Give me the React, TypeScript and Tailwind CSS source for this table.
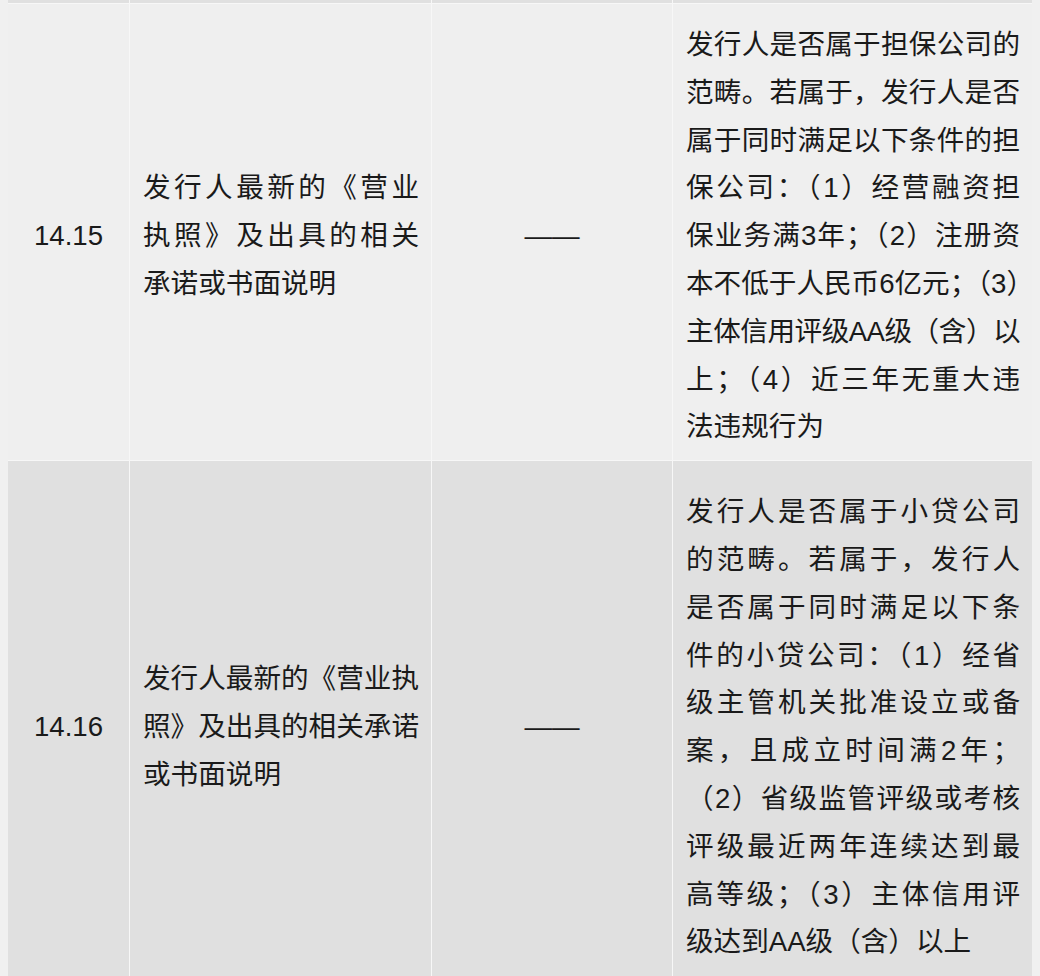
const font = { fontFamily: '"Liberation Sans", "Noto Sans CJK SC", sans-serif' }

interface Row {
  no: string
  material: string[]
  review: string[]
  bg: string
  pad: string
}

// lines that come out a few px wider than the column with our fonts
const tight = new Set(["主体信用评级AA级（含）以"])

const rows: Row[] = [
  {
    no: "14.15",
    material: ["发行人最新的《营业", "执照》及出具的相关", "承诺或书面说明"],
    review: [
      "发行人是否属于担保公司的",
      "范畴。若属于，发行人是否",
      "属于同时满足以下条件的担",
      "保公司：（1）经营融资担",
      "保业务满3年；（2）注册资",
      "本不低于人民币6亿元；（3）",
      "主体信用评级AA级（含）以",
      "上；（4）近三年无重大违",
      "法违规行为",
    ],
    bg: "bg-[#efefef]",
    pad: "pt-[17px] pb-[9px]",
  },
  {
    no: "14.16",
    material: ["发行人最新的《营业执", "照》及出具的相关承诺", "或书面说明"],
    review: [
      "发行人是否属于小贷公司",
      "的范畴。若属于，发行人",
      "是否属于同时满足以下条",
      "件的小贷公司：（1）经省",
      "级主管机关批准设立或备",
      "案，且成立时间满2年；",
      "（2）省级监管评级或考核",
      "评级最近两年连续达到最",
      "高等级；（3）主体信用评",
      "级达到AA级（含）以上",
    ],
    bg: "bg-[#e0e0e0]",
    pad: "pt-[27px] pb-[19px]",
  },
]

// each line is justified to the column width except the paragraph's last one
function Lines({ lines }: { lines: string[] }) {
  return (
    <>
      {lines.map((line, i) => {
        let cls = "whitespace-nowrap"
        if (i < lines.length - 1) cls += " text-justify [text-align-last:justify]"
        if (tight.has(line)) cls += " tracking-[-0.6px]"
        return (
          <div key={line} className={cls}>
            {line}
          </div>
        )
      })}
    </>
  )
}

export default function App() {
  return (
    <div className="h-[976px] overflow-hidden bg-[#f0f0f0] px-2" style={font}>
      <div className="grid grid-cols-[121px_301px_240px_359px] gap-px bg-[#f7f7f7] text-[27.6px] leading-[47.8px] text-[#1a1a1a]">
        {/* tail of the previous row */}
        <div className="h-[3px] bg-[#e0e0e0]" />
        <div className="h-[3px] bg-[#e0e0e0]" />
        <div className="h-[3px] bg-[#e0e0e0]" />
        <div className="h-[3px] bg-[#e0e0e0]" />

        {rows.map((row) => (
          <div key={row.no} className="contents">
            <div className={`flex items-center justify-center ${row.bg} ${row.pad}`}>
              <span>{row.no}</span>
            </div>
            <div className={`flex items-center pl-[13px] pr-[12px] ${row.bg} ${row.pad}`}>
              <div className="w-full">
                <Lines lines={row.material} />
              </div>
            </div>
            <div className={`flex items-center justify-center ${row.bg} ${row.pad}`}>
              <span>——</span>
            </div>
            <div className={`pl-[13px] pr-[12px] ${row.bg} ${row.pad}`}>
              <Lines lines={row.review} />
            </div>
          </div>
        ))}
      </div>
    </div>
  )
}
